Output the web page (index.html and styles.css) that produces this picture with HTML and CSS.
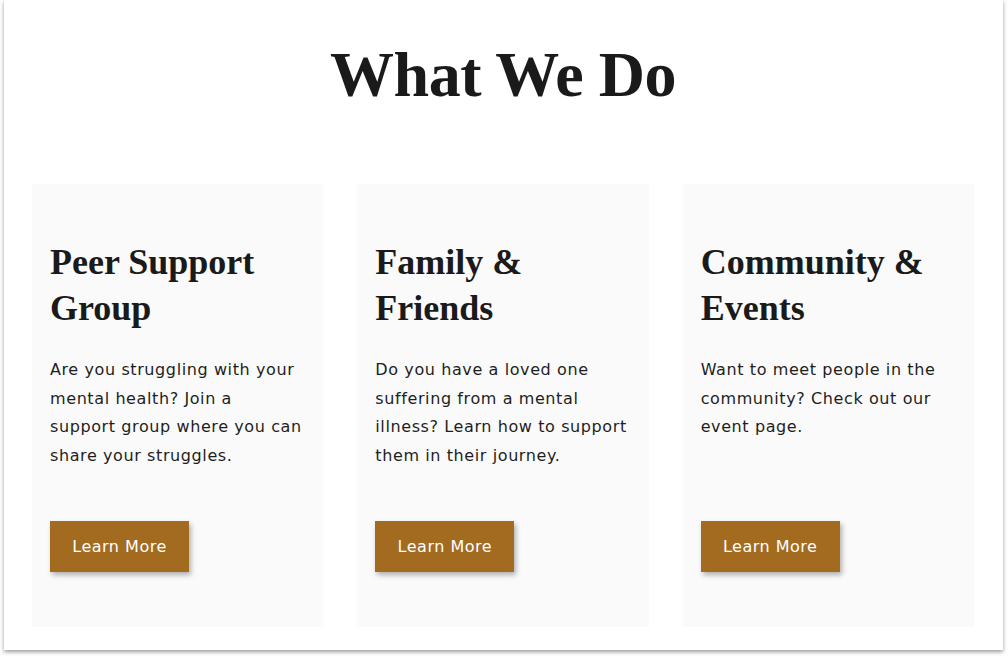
FILE: index.html
```html
<!DOCTYPE html>
<html lang="en">
<head>
<meta charset="utf-8">
<title>What We Do</title>
<link rel="stylesheet" href="styles.css">
</head>
<body>
<div class="frame">
  <section class="what">
    <h1 class="what-title">What We Do</h1>
    <div class="cards">
      <article class="card">
        <h2 class="card-title">Peer Support Group</h2>
        <p class="card-text">Are you struggling with your mental health? Join a support group where you can share your struggles.</p>
        <a class="btn" href="#">Learn More</a>
      </article>
      <article class="card">
        <h2 class="card-title">Family &amp; Friends</h2>
        <p class="card-text">Do you have a loved one suffering from a mental illness? Learn how to support them in their journey.</p>
        <a class="btn" href="#">Learn More</a>
      </article>
      <article class="card">
        <h2 class="card-title">Community &amp; Events</h2>
        <p class="card-text">Want to meet people in the community? Check out our event page.</p>
        <a class="btn" href="#">Learn More</a>
      </article>
    </div>
  </section>
</div>
</body>
</html>
```
FILE: styles.css
```css
html, body {
  margin: 0;
  padding: 0;
  background: #ffffff;
}

body {
  min-height: 658px;
}

.frame {
  margin: 0 5px 0 4px;
  padding: 0 0 23px 28px;
  background: #ffffff;
  box-shadow: 0 2px 4px rgba(0, 0, 0, 0.4);
}

.what {
  width: 942px;
}

.what-title {
  margin: 0;
  padding-top: 36px;
  font-family: "Liberation Serif", "Times New Roman", serif;
  font-weight: 700;
  font-size: 64px;
  line-height: 77px;
  text-align: center;
  color: #1a1a1a;
  letter-spacing: -0.5px;
}

.cards {
  margin-top: 71px;
  display: grid;
  grid-template-columns: repeat(3, 1fr);
  column-gap: 34px;
}

.card {
  background: #fafafa;
  padding: 55px 18px 55px;
  display: flex;
  flex-direction: column;
  align-items: flex-start;
}

.card-title {
  margin: 0;
  font-family: "Liberation Serif", "Times New Roman", serif;
  font-weight: 700;
  font-size: 36px;
  line-height: 46px;
  color: #1a1a1a;
}

.card-text {
  margin: 25px 0 0;
  width: 252.85px;
  font-family: "DejaVu Sans", "Open Sans", sans-serif;
  font-size: 16px;
  letter-spacing: 0.6px;
  line-height: 28.7px;
  color: #1e1e1e;
  flex: 1;
}

.btn {
  margin-top: 50px;
  display: inline-block;
  width: 139px;
  height: 51px;
  box-sizing: border-box;
  line-height: 51px;
  text-align: center;
  background: #a36b1f;
  color: #ffffff;
  font-family: "DejaVu Sans", "Open Sans", sans-serif;
  font-size: 16px;
  letter-spacing: 0.5px;
  text-decoration: none;
  box-shadow: 2px 3px 5px rgba(0, 0, 0, 0.3);
}
```
